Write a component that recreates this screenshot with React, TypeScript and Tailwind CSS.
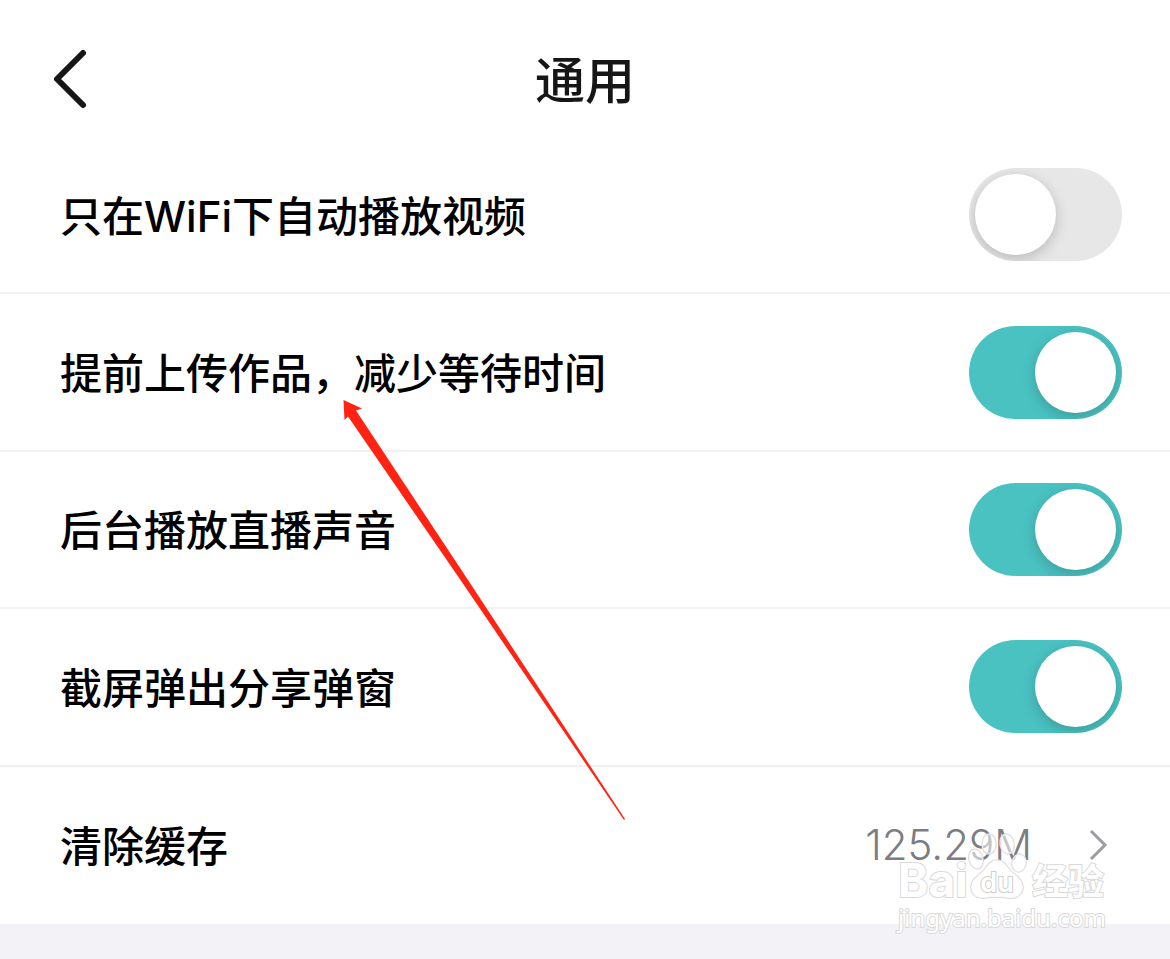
import React, { useState } from 'react';

interface ToggleRowProps {
  id: string;
  label: string;
  defaultChecked?: boolean;
}

const ToggleRow = ({ id, label, defaultChecked = false }: ToggleRowProps) => {
  const [checked, setChecked] = useState(defaultChecked);

  return (
    <div className="flex items-center justify-between pl-15 pr-12 border-b-2 border-[#f1f1f1]">
      <label htmlFor={id} className="pt-1 text-[42px] leading-[60px] font-medium text-black">
        {label}
      </label>
      <input
        id={id}
        type="checkbox"
        role="switch"
        checked={checked}
        onChange={e => setChecked(e.target.checked)}
        className="appearance-none shrink-0 w-[153px] h-[93px] p-1.5 rounded-full overflow-hidden cursor-pointer bg-[#e7e7e7] checked:bg-[#4ac2c2] before:block before:w-[81px] before:h-[81px] before:rounded-full before:bg-white before:shadow-[0_4px_14px_rgba(0,0,0,0.2)] checked:before:ml-[60px]"
      />
    </div>
  );
};

const Watermark = () => (
  <div className="absolute right-16 -bottom-3 w-[208px] pointer-events-none select-none text-white [paint-order:stroke] [-webkit-text-stroke:2px_#d9d9d9]">
    <div className="flex items-end h-[70px]">
      <span className="w-[68px] font-['Inter',sans-serif] text-[46px] leading-[40px] font-bold">Bai</span>
      <svg width="62" height="68" viewBox="0 0 62 68" className="shrink-0" aria-hidden="true">
        <g fill="#fff" fillOpacity="0.55" stroke="#d9d9d9" strokeWidth="1.5">
          <ellipse cx="10" cy="27" rx="7" ry="10" transform="rotate(-14 10 27)" />
          <ellipse cx="23" cy="12" rx="7" ry="10" />
          <ellipse cx="41" cy="12" rx="7" ry="10" transform="rotate(-12 41 12)" />
          <ellipse cx="53" cy="31" rx="7" ry="9" transform="rotate(10 53 31)" />
          <path d="M31 28C24 28 21 34 17 39C12 44 5 47 5 55C5 62 10 67 18 66C24 65 37 65 43 66C52 67 57 62 57 55C57 47 50 44 45 39C41 34 38 28 31 28Z" />
        </g>
        <text x="31" y="60" textAnchor="middle" fill="#fff" stroke="#d0d0d0" strokeWidth="2" fontSize="27" fontWeight="600" fontFamily="Inter, sans-serif">du</text>
      </svg>
      <span className="ml-1 text-[36px] leading-[36px] font-bold">经验</span>
    </div>
    <div className="font-['Noto_Sans',sans-serif] text-[24px] leading-[36px] font-normal">jingyan.baidu.com</div>
  </div>
);

export default function App() {
  return (
    <div className="relative min-h-screen flex flex-col bg-[#f2f2f7] font-['Inter','Noto_Sans_CJK_SC',sans-serif]">
      <header className="grid grid-cols-[1fr_auto_1fr] items-center h-[137px] pt-5 pl-12 pr-12 bg-white">
        <button type="button" aria-label="返回" className="justify-self-start cursor-pointer">
          <svg width="44" height="64" viewBox="0 0 44 64" fill="none" stroke="#161616" strokeWidth="6" strokeLinecap="round" strokeLinejoin="round">
            <path d="M35 6L9 32L35 58" />
          </svg>
        </button>
        <h1 className="pt-1 text-[50px] leading-[72px] font-medium text-[#161616]">通用</h1>
      </header>

      <main className="relative grid auto-rows-fr min-h-[787px] bg-white">
        <ToggleRow id="wifi-autoplay" label="只在WiFi下自动播放视频" />
        <ToggleRow id="pre-upload" label="提前上传作品，减少等待时间" defaultChecked />
        <ToggleRow id="background-audio" label="后台播放直播声音" defaultChecked />
        <ToggleRow id="screenshot-share" label="截屏弹出分享弹窗" defaultChecked />

        <button type="button" className="flex items-center justify-between pl-15 pr-12 text-left cursor-pointer">
          <span className="pt-1 text-[42px] leading-[60px] font-medium text-black">清除缓存</span>
          <span className="flex items-center gap-14">
            <span className="text-[42px] leading-[60px] font-light text-[#7c7c83]">125.29M</span>
            <svg width="34" height="40" viewBox="0 0 34 40" fill="none" stroke="#9c9ca1" strokeWidth="3" aria-hidden="true">
              <path d="M3 6L17 20L3 34" />
            </svg>
          </span>
        </button>

        <Watermark />
      </main>

      {/* Pointer drawn over the list */}
      <svg width="282" height="420" viewBox="0 0 282 420" className="absolute left-[343px] top-[400px] pointer-events-none" aria-hidden="true">
        <path d="M0.5 0L19 8.5L13 10.5L125 180L282 419L281 420L117.500 180L5 16.5L1.500 20Z" fill="#ff2314" />
      </svg>
    </div>
  );
}
